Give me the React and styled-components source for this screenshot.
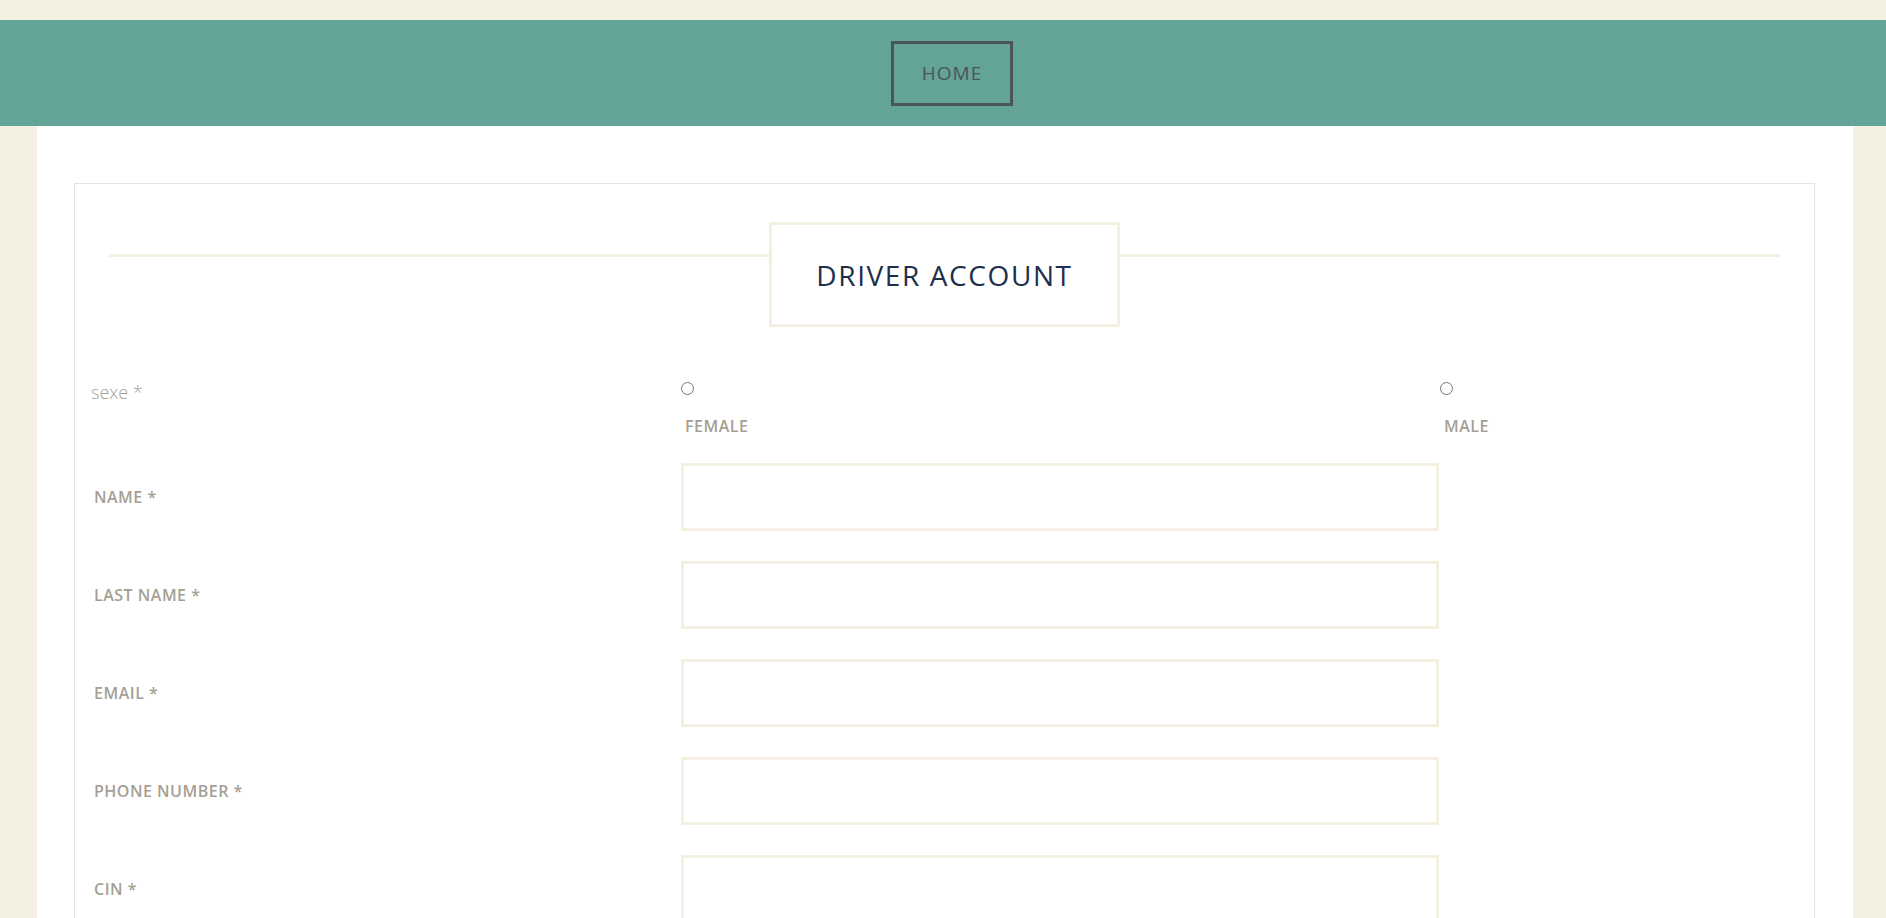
import React from "react";
import styled, { createGlobalStyle } from "styled-components";

const beige = "#f3efe1";
const teal = "#64a498";
const labelGrey = "#a59f94";

const GlobalStyle = createGlobalStyle`
  body {
    margin: 0;
    background: ${beige};
    font-family: "Open Sans", "Noto Sans", sans-serif;
  }
  * {
    box-sizing: border-box;
  }
`;

const Page = styled.div`
  padding-top: 20px;
`;

const Nav = styled.nav`
  height: 106px;
  background: ${teal};
  display: flex;
  align-items: center;
  justify-content: center;
  padding-left: 18px;
`;

const HomeButton = styled.a`
  width: 122px;
  height: 65px;
  border: 3px solid #4a555a;
  color: #4a555a;
  display: flex;
  align-items: center;
  justify-content: center;
  font-size: 19px;
  font-weight: 400;
  letter-spacing: 1px;
  text-decoration: none;
  cursor: pointer;
`;

const Main = styled.main`
  background: #fff;
  margin: 0 33px 0 37px;
  padding: 57px 38px 40px 37px;
`;

const Card = styled.section`
  border: 1px solid #e3e3e3;
  padding: 38px 16px 40px;
`;

const Heading = styled.div`
  display: flex;
  align-items: flex-start;
  margin: 0 18px;
`;

const Line = styled.div`
  flex: 1;
  height: 3px;
  margin-top: 32px;
  background: ${beige};
`;

const TitleBox = styled.h1`
  margin: 0;
  width: 351px;
  height: 105px;
  border: 3px solid ${beige};
  display: flex;
  align-items: center;
  justify-content: center;
  font-size: 28px;
  font-weight: 400;
  color: #1d2f4b;
  letter-spacing: 1.6px;
`;

const Row = styled.div`
  display: grid;
  grid-template-columns: 590px 759px 1fr;
  align-items: ${(p) => (p.top ? "start" : "center")};
  margin-top: ${(p) => p.gap}px;
`;

const SexLabel = styled.span`
  font-size: 18px;
  font-weight: 300;
  color: ${labelGrey};
  line-height: 22px;
  margin-top: -1px;
`;

const Option = styled.label`
  display: flex;
  flex-direction: column;
  align-items: flex-start;
`;

const Radio = styled.input.attrs({ type: "radio" })`
  appearance: none;
  width: 13px;
  height: 13px;
  margin: 0;
  border: 1px solid #767676;
  border-radius: 50%;
  background: #fff;
`;

const OptionText = styled.span`
  margin: 22px 0 0 4px;
  font-size: 16px;
  font-weight: 600;
  line-height: 19px;
  letter-spacing: 0.5px;
  color: ${labelGrey};
  text-transform: uppercase;
`;

const FieldLabel = styled.label`
  padding-left: 3px;
  font-size: 16px;
  font-weight: 600;
  color: ${labelGrey};
  text-transform: uppercase;
  letter-spacing: 0.5px;
`;

const Input = styled.input`
  width: 758px;
  height: 68px;
  border: 3px solid ${beige};
  outline: none;
  padding: 0 14px;
  font-size: 16px;
  font-family: inherit;
`;

const fields = ["Name", "Last name", "Email", "Phone number", "Cin"];

export default function App() {
  return (
    <>
      <GlobalStyle />
      <Page>
        <Nav>
          <HomeButton>HOME</HomeButton>
        </Nav>
        <Main>
          <Card>
            <Heading>
              <Line />
              <TitleBox>DRIVER ACCOUNT</TitleBox>
              <Line />
            </Heading>

            <Row top gap={55}>
              <SexLabel>sexe *</SexLabel>
              <Option>
                <Radio name="sexe" value="female" />
                <OptionText>Female</OptionText>
              </Option>
              <Option>
                <Radio name="sexe" value="male" />
                <OptionText>Male</OptionText>
              </Option>
            </Row>

            {fields.map((f, i) => (
              <Row key={f} gap={i === 0 ? 27 : 30}>
                <FieldLabel>{f} *</FieldLabel>
                <Input />
              </Row>
            ))}
          </Card>
        </Main>
      </Page>
    </>
  );
}
